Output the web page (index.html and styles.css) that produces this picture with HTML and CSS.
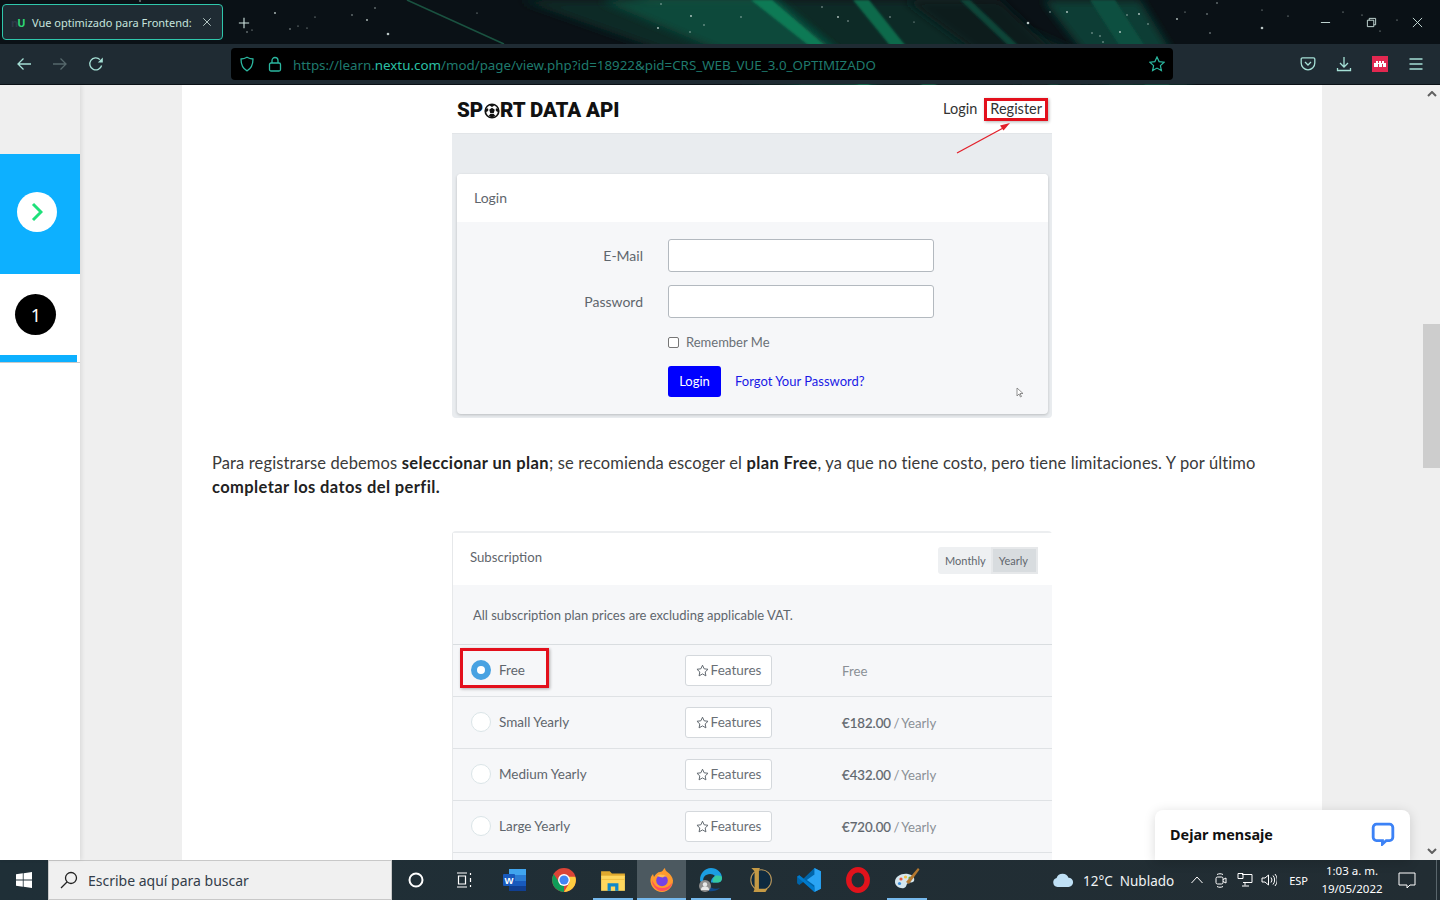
FILE: index.html
```html
<!DOCTYPE html>
<html lang="es">
<head>
<meta charset="utf-8">
<title>Vue optimizado para Frontend</title>
<link rel="stylesheet" href="styles.css">
</head>
<body>
<div class="screen">
  <header class="chrome">
    <svg class="wallpaper" viewBox="0 0 1440 85" preserveAspectRatio="none">
      <defs>
        <filter id="soft"><feGaussianBlur stdDeviation="4"/></filter>
        <filter id="soft1"><feGaussianBlur stdDeviation="1.200"/></filter>
      </defs>
      <polygon points="520,0 960,0 1150,85 760,85" fill="#0a2a28" filter="url(#soft)"/>
      <polygon points="629,0 777,0 875,85 855,85" fill="#0c5a44" filter="url(#soft)"/>
      <polygon points="600,0 770,0 880,85 800,85" fill="#0b4a3b" filter="url(#soft)"/>
      <polygon points="751,0 772,0 871,85 859,85" fill="#0f7a55" filter="url(#soft1)"/>
      <polygon points="853,0 869,0 937,85 922,85" fill="#0e6a4c" filter="url(#soft1)"/>
      <polygon points="905,0 1000,0 1090,85 1020,85" fill="#071e1c" filter="url(#soft)"/>
      <polygon points="960,0 970,0 1060,85 1050,85" fill="#0c4438" filter="url(#soft1)"/>
      <polygon points="1043,0 1140,0 1192,85 1109,85" fill="#0b3d34" filter="url(#soft)"/>
      <polygon points="1090,0 1115,0 1170,85 1145,85" fill="#0d5040" filter="url(#soft1)"/>
      <line x1="407" y1="0" x2="504" y2="44" stroke="#1a5240" stroke-width="1.600"/>
      <g class="stars">
        <circle cx="388" cy="34" r="1.300"/><circle cx="1028" cy="23" r="1.300"/><circle cx="1262" cy="28" r="1.300"/>
        <circle cx="140" cy="1" r=".8"/><circle cx="275" cy="13" r=".9"/><circle cx="315" cy="17" r=".6"/><circle cx="352" cy="15" r=".7"/><circle cx="375" cy="8" r=".7"/><circle cx="367" cy="20" r=".9"/><circle cx="290" cy="29" r=".7"/><circle cx="298" cy="26" r=".6"/><circle cx="307" cy="28" r=".6"/><circle cx="247" cy="32" r=".7"/><circle cx="252" cy="30" r=".6"/><circle cx="477" cy="13" r=".6"/>
        <circle cx="1067" cy="12" r=".9"/><circle cx="1050" cy="12" r=".7"/><circle cx="1127" cy="15" r=".7"/><circle cx="1139" cy="14" r=".9"/><circle cx="1148" cy="24" r=".7"/><circle cx="1120" cy="32" r=".9"/><circle cx="1092" cy="33" r=".7"/><circle cx="1100" cy="36" r=".7"/><circle cx="1103" cy="42" r=".7"/><circle cx="1177" cy="19" r=".9"/><circle cx="1185" cy="12" r=".6"/><circle cx="1207" cy="14" r=".7"/><circle cx="1210" cy="33" r=".7"/><circle cx="1262" cy="10" r=".6"/><circle cx="1288" cy="16" r=".6"/><circle cx="1343" cy="12" r=".6"/><circle cx="1362" cy="15" r=".6"/><circle cx="1217" cy="3" r=".7"/><circle cx="1380" cy="31" r=".6"/><circle cx="1397" cy="20" r=".6"/>
        <circle cx="661" cy="4" r=".7"/><circle cx="691" cy="16" r=".9"/><circle cx="741" cy="17" r=".7"/><circle cx="704" cy="25" r=".7"/><circle cx="658" cy="28" r=".9"/><circle cx="690" cy="32" r=".7"/><circle cx="838" cy="17" r=".9"/><circle cx="848" cy="21" r=".7"/><circle cx="822" cy="7" r=".7"/><circle cx="890" cy="17" r=".7"/><circle cx="914" cy="22" r=".6"/>
      </g>
    </svg>

    <div class="tabstrip">
      <div class="tab">
        <span class="favicon"><span class="fav-n">n</span><span class="fav-u">U</span></span>
        <span class="tab-title">Vue optimizado para Frontend:</span>
        <svg class="tab-close" viewBox="0 0 12 12"><path d="M1.500 1.500l9 9M10.500 1.500l-9 9"/></svg>
      </div>
      <svg class="new-tab" viewBox="0 0 14 14"><path d="M7 1v12M1 7h12"/></svg>
      <div class="win-controls">
        <span class="win-btn"><svg viewBox="0 0 12 12"><path d="M1 6h10"/></svg></span>
        <span class="win-btn"><svg viewBox="0 0 12 12"><path d="M1.500 3.500h7v7h-7zM3.500 3.500v-2h7v7h-2"/></svg></span>
        <span class="win-btn"><svg viewBox="0 0 12 12"><path d="M1 1l10 10M11 1L1 11"/></svg></span>
      </div>
    </div>

    <div class="toolbar">
      <div class="nav-group">
        <svg class="tool-ico" viewBox="0 0 16 16"><path d="M15 8H2M7.500 2.500L2 8l5.500 5.500"/></svg>
        <svg class="tool-ico dim" viewBox="0 0 16 16"><path d="M1 8h13M8.500 2.500L14 8l-5.500 5.500"/></svg>
        <svg class="tool-ico" viewBox="0 0 16 16"><path d="M13.600 9.500A6 6 0 1 1 12 3.600"/><path class="filled" d="M14.800 1.500v5h-5z"/></svg>
      </div>
      <div class="urlbar">
        <svg class="url-ico" viewBox="0 0 16 16"><path d="M8 1.200c2 1.200 4 1.700 6 1.800 0 5-1.500 9.500-6 11.800C3.500 12.500 2 8 2 3c2-.1 4-.6 6-1.800z"/></svg>
        <svg class="url-ico lock" viewBox="0 0 16 16"><rect x="2.500" y="7" width="11" height="8" rx="1.500"/><path d="M5 7V4.500a3 3 0 0 1 6 0V7"/></svg>
        <span class="url">https://learn.<b>nextu.com</b>/mod/page/view.php?id=18922&amp;pid=CRS_WEB_VUE_3.0_OPTIMIZADO</span>
        <svg class="url-ico star" viewBox="0 0 16 16"><path d="M8 1l2.100 4.600 5 .6-3.700 3.400 1 5L8 12.100 3.600 14.600l1-5L.9 6.200l5-.6z"/></svg>
      </div>
      <div class="tool-right">
        <svg class="tool-ico" viewBox="0 0 16 16"><path d="M2.500 1.800h11c.8 0 1.300.5 1.300 1.300V7a6.800 6.800 0 0 1-13.600 0V3.100c0-.8.500-1.300 1.300-1.300z"/><path d="M5 6l3 3 3-3"/></svg>
        <svg class="tool-ico" viewBox="0 0 16 16"><path d="M8 1v10M4 7l4 4 4-4M1.500 12v2.500h13V12"/></svg>
        <svg class="moz" viewBox="0 0 16 16"><rect width="16" height="16" fill="#e22850"/><path fill="#fff" d="M2 11V7h2V5h2v2h1V5h2v2h1V5h2v2h2v4h-3V8h-1v3H7V8H6v3z"/></svg>
        <svg class="tool-ico" viewBox="0 0 16 16"><path d="M1.500 3h13M1.500 8h13M1.500 13h13"/></svg>
      </div>
    </div>
  </header>

  <div class="page">
    <aside class="sidebar">
      <div class="side-top"></div>
      <div class="side-toggle">
        <span class="toggle-disc"><svg viewBox="0 0 12 20"><path d="M2 2l8 8-8 8"/></svg></span>
      </div>
      <div class="side-body">
        <div class="side-step"><span class="step-num">1</span></div>
        <div class="side-progress"></div>
        <div class="side-rule"></div>
      </div>
    </aside>

    <main class="content">
      <section class="shot shot-login">
        <div class="app-head">
          <span class="logo">SP<svg class="ball" viewBox="0 0 20 20"><circle cx="10" cy="10" r="8.500"/><path class="ball-fill" d="M10 6l3.500 2.500-1.300 4h-4.400l-1.300-4zM10 1.500l3 1.500-3 2-3-2zM2 7.500l3-1 .5 2.500L3 12zM18 7.500l-3-1-.5 2.500L17 12zM6 16l2-2.500h4l2 2.500-4 2.500z"/></svg>RT DATA API</span>
          <nav class="app-nav"><span>Login</span><span>Register</span></nav>
        </div>
        <div class="app-body">
          <div class="card">
            <div class="card-head">Login</div>
            <div class="card-form">
              <div class="form-row"><label class="form-label">E-Mail</label><span class="form-input"></span></div>
              <div class="form-row"><label class="form-label">Password</label><span class="form-input"></span></div>
              <div class="form-check"><span class="check-box"></span>Remember Me</div>
              <div class="form-actions"><span class="btn-login">Login</span><span class="forgot">Forgot Your Password?</span></div>
            </div>
          </div>
        </div>
        <div class="mark mark-register"></div>
        <svg class="arrow" viewBox="0 0 60 40"><path d="M2 33L50 7" stroke="#e3202a" stroke-width="1.300" fill="none"/><path d="M55 3l-10 2.500 3.500 5z" fill="#e3202a"/></svg>
        <svg class="cursor" viewBox="0 0 8 12"><path d="M1 1v8l2-2 1.500 3 1-.5L4 6.500h3z" fill="#fff" stroke="#777" stroke-width=".8"/></svg>
      </section>

      <p class="lesson">Para registrarse debemos <strong>seleccionar un plan</strong>; se recomienda escoger el <strong>plan Free</strong>, ya que no tiene costo, pero tiene limitaciones. Y por último <strong>completar los datos del perfil.</strong></p>

      <section class="shot shot-plans">
        <div class="plans-head">
          <span>Subscription</span>
          <div class="period"><span>Monthly</span><span class="period-on">Yearly</span></div>
        </div>
        <div class="plans-note">All subscription plan prices are excluding applicable VAT.</div>
        <div class="plan">
          <span class="radio radio-on"></span><span class="plan-name">Free</span>
          <span class="features"><svg class="f-star" viewBox="0 0 16 16"><path d="M8 1.500l2 4.400 4.800.6-3.500 3.300.9 4.800L8 12.200l-4.200 2.400.9-4.800L1.200 6.500 6 5.900z"/></svg>Features</span>
          <span class="price-free">Free</span>
        </div>
        <div class="plan">
          <span class="radio"></span><span class="plan-name">Small Yearly</span>
          <span class="features"><svg class="f-star" viewBox="0 0 16 16"><path d="M8 1.500l2 4.400 4.800.6-3.500 3.300.9 4.800L8 12.200l-4.200 2.400.9-4.800L1.200 6.500 6 5.900z"/></svg>Features</span>
          <span class="price"><b>€182.00</b> / Yearly</span>
        </div>
        <div class="plan">
          <span class="radio"></span><span class="plan-name">Medium Yearly</span>
          <span class="features"><svg class="f-star" viewBox="0 0 16 16"><path d="M8 1.500l2 4.400 4.800.6-3.500 3.300.9 4.800L8 12.200l-4.200 2.400.9-4.800L1.200 6.500 6 5.900z"/></svg>Features</span>
          <span class="price"><b>€432.00</b> / Yearly</span>
        </div>
        <div class="plan">
          <span class="radio"></span><span class="plan-name">Large Yearly</span>
          <span class="features"><svg class="f-star" viewBox="0 0 16 16"><path d="M8 1.500l2 4.400 4.800.6-3.500 3.300.9 4.800L8 12.200l-4.200 2.400.9-4.800L1.200 6.500 6 5.900z"/></svg>Features</span>
          <span class="price"><b>€720.00</b> / Yearly</span>
        </div>
        <div class="plan plan-cut"></div>
        <div class="mark mark-free"></div>
      </section>
    </main>

    <div class="scrollbar">
      <svg class="sb-arrow" viewBox="0 0 10 6"><path d="M1 5l4-4 4 4"/></svg>
      <div class="sb-track"><div class="sb-thumb"></div></div>
      <svg class="sb-arrow" viewBox="0 0 10 6"><path d="M1 1l4 4 4-4"/></svg>
    </div>

    <div class="chat">
      <span>Dejar mensaje</span>
      <svg class="chat-ico" viewBox="0 0 22 22"><path d="M5 2h12a3 3 0 0 1 3 3v9a3 3 0 0 1-3 3h-3l-3.500 3.200V17H5a3 3 0 0 1-3-3V5a3 3 0 0 1 3-3z"/></svg>
    </div>
  </div>

  <footer class="taskbar">
    <div class="start">
      <svg viewBox="0 0 16 16"><path fill="#fff" d="M0 2.300l6.800-1v6.300H0zM7.600 1.200L16 0v7.600H7.600zM0 8.400h6.800v6.300l-6.800-1zM7.600 8.400H16V16l-8.400-1.200z"/></svg>
    </div>
    <div class="search">
      <svg viewBox="0 0 18 18"><circle cx="11" cy="7" r="5.500"/><path d="M7 11l-6 6"/></svg>
      <span>Escribe aquí para buscar</span>
    </div>
    <div class="task task-sys"><svg viewBox="0 0 18 18"><circle class="cortana" cx="9" cy="9" r="6.500"/></svg></div>
    <div class="task task-sys"><svg viewBox="0 0 18 18"><path class="sys-line" d="M2 2h10M2 16h10M3.500 5h7v8h-7zM15.500 2v2M15.500 7v4M15.500 14v2"/></svg></div>
    <div class="task task-first"><svg viewBox="0 0 26 26"><rect x="7" y="2" width="17" height="22" rx="1" fill="#2b7cd3"/><rect x="7" y="2" width="17" height="6" fill="#41a5ee"/><rect x="7" y="14" width="17" height="5" fill="#185abd"/><rect x="7" y="19" width="17" height="5" fill="#103f91"/><rect x="1" y="7" width="12" height="12" rx="1" fill="#185abd"/><text x="7" y="16.500" class="word-w">W</text></svg></div>
    <div class="task"><svg viewBox="0 0 24 24"><circle cx="12" cy="12" r="11" fill="#db4437"/><path fill="#0f9d58" d="M12 23a11 11 0 0 1-9.500-16.500L8 15l4 1z"/><path fill="#ffcd40" d="M23 12a11 11 0 0 1-11 11l5-8.500-1-5.500h6.300c.5 1 .7 2 .7 3z"/><circle cx="12" cy="12" r="5.500" fill="#fff"/><circle cx="12" cy="12" r="4.200" fill="#4285f4"/></svg></div>
    <div class="task task-open"><svg viewBox="0 0 24 24"><path fill="#e0a92e" d="M1 4h8l2 2h12v3H1z"/><path fill="#ffd75e" d="M1 8h22v14H1z"/><rect x="7" y="15" width="10" height="7" fill="#0f88c9"/><rect x="10" y="18" width="4" height="4" fill="#ffd75e"/><rect x="1" y="11" width="22" height="1" fill="#f2c244"/></svg></div>
    <div class="task task-active"><svg viewBox="0 0 26 26"><path fill="#ff9a2e" d="M13 25A11.500 11.500 0 0 1 2 10c1-2 1.500-2 2-3l1 3c1.500-3 4-5 6-5 3 0 3-3 5-4 0 2 1 3 3 4.500 2.500 2 4.500 4.500 5 8A11.500 11.500 0 0 1 13 25z"/><path fill="#ff4f5e" d="M3 13c0 6 5 11 10 11 6 0 10-5 10-8-2 3-6 5-10 5-5 0-8-3-10-8z"/><circle cx="13" cy="13.500" r="5.800" fill="#7542e5"/><path fill="#ffbd4f" d="M8 9c3-2 7-2 10 1-2-.8-3-.5-4 .5-2 0-4-1-6-1.500z"/></svg></div>
    <div class="task task-open"><svg viewBox="0 0 26 26"><path fill="#1b9de2" d="M2 13C2 6 7 1 13 1c6 0 11 4.500 11 10 0 3-2 4.500-4.500 4.500H13c0-4 3-6 4-6.500-2-2.500-8-3-11 1-1 1.500-1 4-.5 6-2-.5-3.500-1.500-3.500-3z"/><path fill="#36c9a0" d="M24 11c0 3-2 4.500-4.500 4.500H15c-1-3 1-6 3-7 3 0 6 0 6 2.500z"/><path fill="#114a8b" d="M8 23c3 2 10 2 14-2-3 1-6 1-9-.5z"/><circle cx="7" cy="19" r="6" fill="#8e8e8e"/><circle cx="7" cy="17.500" r="2.200" fill="#e8e8e8"/><path fill="#e8e8e8" d="M3 23c0-3 2-3.500 4-3.500s4 .5 4 3.500z"/></svg></div>
    <div class="task"><svg viewBox="0 0 24 24"><circle cx="13" cy="12" r="9.500" fill="#0f2a3f" stroke="#b9975b" stroke-width="1"/><path fill="#c59a45" d="M4 1h8l-1 2v17h8l-2 3H6l1-3V4z"/></svg></div>
    <div class="task"><svg viewBox="0 0 24 24"><path fill="#0065a9" d="M17 1l6 3v16l-6 3-10-9.500L3 16.500 1 15V9l2-1.500 4 3z"/><path fill="#2aa4f4" d="M17 1l6 3v16l-6 3zM17 7l-7 5 7 5z"/><path fill="#007acc" d="M1 9l2-1.500L17 19v4L1 9z"/></svg></div>
    <div class="task"><svg viewBox="0 0 24 24"><ellipse class="opera" cx="12" cy="12" rx="8.500" ry="9.500"/></svg></div>
    <div class="task task-open"><svg viewBox="0 0 26 26"><path fill="#d5e6ee" d="M1 15C1 9 8 6 14 7c5 1 7 4 6 7-1 2-4 1-6 2-2 1-1 4-4 5-4 1-9-2-9-6z"/><circle cx="7" cy="12" r="1.600" fill="#e8563f"/><circle cx="11.500" cy="10" r="1.600" fill="#f2c244"/><circle cx="16" cy="11" r="1.600" fill="#57b94a"/><circle cx="5.500" cy="16.500" r="1.600" fill="#3d8fdb"/><path fill="#b5782f" d="M24 1l1.500 1.500L15 17l-3-2z"/></svg></div>

    <div class="tray">
      <svg class="cloud" viewBox="0 0 24 16"><path d="M6 15a5 5 0 0 1-1-9.800A7 7 0 0 1 18 5a5 5 0 0 1 0 10z"/></svg>
      <span class="weather">12°C&nbsp;&nbsp;Nublado</span>
      <svg class="tray-ico chev" viewBox="0 0 14 14"><path d="M1.500 10L7 4l5.500 6"/></svg>
      <svg class="tray-ico" viewBox="0 0 16 16"><rect x="3" y="5" width="7" height="7" rx="1.500"/><path d="M10 7.500l3-1.500v5l-3-1.500M4 2.500c2-1 4-1 6 0M4 14.500c2 1 4 1 6 0"/></svg>
      <svg class="tray-ico" viewBox="0 0 16 16"><path d="M5 2.500h10v8H6M1 1.500h5v5H1zM8 10.500v3M5 14h7"/></svg>
      <svg class="tray-ico" viewBox="0 0 16 16"><path d="M1 6v4h3l3.500 3V3L4 6zM10 5.500a4 4 0 0 1 0 5M12 3.500a7 7 0 0 1 0 9M14 2a9 9 0 0 1 0 12"/></svg>
      <span class="lang">ESP</span>
      <div class="clock"><span>1:03 a. m.</span><span>19/05/2022</span></div>
      <svg class="tray-ico notify" viewBox="0 0 18 18"><path d="M1 2h16v12h-5l-3 3v-3H1z"/></svg>
      <span class="show-desk"></span>
    </div>
  </footer>
</div>
</body>
</html>
```

FILE: styles.css
```css
* { box-sizing: border-box; }
html, body { margin: 0; height: 100%; }
body { overflow: hidden; font-family: "Lato", "Noto Sans", sans-serif; background: #efefef; }
svg { display: block; flex: none; }

.screen { width: 1440px; height: 900px; display: flex; flex-direction: column; overflow: hidden; }

/* browser chrome */
.chrome { position: relative; height: 85px; flex: none; background: #0a1116; }
.wallpaper { position: absolute; left: 0; top: 0; width: 1440px; height: 85px; }
.stars { fill: #d9e6e3; opacity: .85; }
.tabstrip { position: relative; height: 44px; display: flex; align-items: flex-start; padding: 4px 0 0 2px; }
.tab { width: 221px; height: 36px; display: flex; align-items: center; padding: 0 10px 0 8px; background: #1f2b33; border: 1px solid #2fc7ac; border-radius: 4px; color: #c6e4de; font: 11px "Noto Sans", sans-serif; }
.favicon { width: 16px; display: flex; font: 700 11px/1 "Noto Sans", sans-serif; letter-spacing: -1px; flex: none; margin-right: 5px; }
.fav-n { color: #2f3a48; }
.fav-u { color: #2ed573; }
.tab-title { flex: 1; white-space: nowrap; }
.tab-close { width: 10px; height: 10px; margin-left: 7px; }
.tab-close path, .new-tab path, .win-btn path { fill: none; stroke: #cfe5e0; stroke-width: 1; }
.new-tab { width: 12px; height: 12px; margin: 13px 0 0 15px; }
.new-tab path { stroke-width: 1.300; }
.win-controls { margin-left: auto; margin-top: -4px; display: flex; }
.win-btn { width: 46px; height: 44px; display: flex; align-items: center; justify-content: center; }
.win-btn svg { width: 11px; height: 11px; }

.toolbar { position: relative; height: 40px; background: #1f2b33; display: flex; align-items: center; }
.nav-group { width: 231px; padding-left: 16px; display: flex; gap: 20px; }
.tool-ico { width: 16px; height: 16px; fill: none; stroke: #a5e0d6; stroke-width: 1.300; }
.tool-ico.dim { stroke: #56686c; }
.tool-ico .filled { fill: #a5e0d6; stroke: none; }
.urlbar { width: 942px; height: 32px; background: #000; border-radius: 4px; display: flex; align-items: center; padding: 0 8px; }
.url-ico { width: 16px; height: 16px; fill: none; stroke: #2bb8a0; stroke-width: 1.300; }
.lock { margin-left: 12px; }
.url { margin: 2px 0 0 10px; font: 13.350px "Noto Sans", sans-serif; color: #1f7a6d; white-space: nowrap; }
.url b { font-weight: 400; color: #2bc0a6; }
.star { margin-left: auto; stroke-width: 1.200; }
.tool-right { margin-left: auto; display: flex; align-items: center; gap: 20px; padding-right: 16px; }
.moz { width: 16px; height: 16px; }

/* page */
.page { position: relative; flex: 1; min-height: 0; display: flex; background: #efefef; }
.sidebar { width: 80px; flex: none; display: flex; flex-direction: column; box-shadow: 2px 0 4px rgba(0,0,0,.08); position: relative; z-index: 1; background: #efefef; }
.side-top { height: 69px; flex: none; }
.side-toggle { height: 120px; flex: none; background: #0db0ff; display: flex; align-items: center; padding-left: 17px; }
.toggle-disc { width: 40px; height: 40px; border-radius: 50%; background: #fff; display: flex; align-items: center; justify-content: center; margin-top: -4px; }
.toggle-disc svg { width: 12px; height: 20px; fill: none; stroke: #1ee07a; stroke-width: 3; }
.side-body { flex: 1; background: #fff; display: flex; flex-direction: column; }
.side-step { height: 81px; padding: 20px 0 0 15px; }
.step-num { width: 41px; height: 41px; border-radius: 50%; background: #000; color: #fff; display: flex; align-items: center; justify-content: center; padding-left: 1px; font: 18px "Noto Sans", sans-serif; }
.side-progress { width: 77px; height: 7px; background: #0db0ff; }
.side-rule { height: 1px; background: #c9c9c9; }

.content { width: 1140px; margin-left: 102px; flex: none; background: #fff; display: flex; flex-direction: column; overflow: hidden; }
.shot { position: relative; width: 600px; margin: 0 auto; flex: none; font-size: 14px; color: #5f666d; }
.shot-login { height: 333px; display: flex; flex-direction: column; }

.app-head { height: 48px; background: #fff; display: flex; justify-content: space-between; padding: 11px 10px 0 5px; }
.logo { display: flex; align-items: center; height: 27px; margin-top: 1px; font: 900 20.500px/1 "Roboto", sans-serif; color: #111; letter-spacing: -.1px; }
.ball { width: 16px; height: 16px; margin: 0 .5px; }
.ball circle { fill: #fff; stroke: #111; stroke-width: 2; }
.ball-fill { fill: #111; }
.app-nav { display: flex; gap: 13px; font-size: 14.500px; color: #333; height: 26px; margin-top: -1px; align-items: center; }
.app-body { flex: 1; background: #e9ecef; border-top: 1px solid #e2e5e8; border-radius: 0 0 4px 4px; padding: 40px 4px 4px 5px; }
.card { height: 240px; border-radius: 4px; background: #f6f7f9; box-shadow: 0 1px 3px rgba(0,0,0,.2); overflow: hidden; }
.card-head { height: 48px; background: #fff; padding: 15px 17px; font-size: 14px; color: #5f666d; line-height: 18px; }
.card-form { padding-top: 17px; display: flex; flex-direction: column; }
.form-row { display: flex; align-items: center; margin-bottom: 13px; font-size: 14px; }
.form-label { width: 186px; text-align: right; margin-right: 25px; padding-bottom: 1px; }
.form-input { width: 266px; height: 33px; background: #fff; border: 1px solid #b3b9bf; border-radius: 3px; }
.form-check { display: flex; align-items: center; margin: 3px 0 17px 211px; height: 15px; font-size: 13px; color: #6a7076; }
.check-box { width: 11px; height: 11px; margin: 1px 7px 0 0; border: 1px solid #767676; border-radius: 2px; background: #fff; }
.form-actions { display: flex; align-items: center; margin-left: 211px; font-size: 13px; }
.btn-login { width: 53px; height: 31px; padding-bottom: 1px; background: #0000ff; color: #fff; border-radius: 3px; display: flex; align-items: center; justify-content: center; }
.forgot { margin: -1px 0 0 14px; color: #1a1ae6; }

.mark { position: absolute; border: 3px solid #e3101c; box-shadow: 1px 1px 3px rgba(0,0,0,.3); }
.mark-register { left: 532px; top: 13px; width: 64px; height: 23px; }
.mark-free { left: 7px; top: 115px; width: 89px; height: 40px; }
.arrow { position: absolute; left: 503px; top: 35px; width: 60px; height: 40px; }
.cursor { position: absolute; left: 564px; top: 302px; width: 8px; height: 12px; }

.lesson { width: 1080px; margin: 33px auto 32px; flex: none; font: 16.500px/24px "Lato", sans-serif; letter-spacing: .13px; color: #3a3a3a; }
.lesson strong { font-weight: 700; color: #222; letter-spacing: .4px; }

.shot-plans { background: #f6f7f9; border-top: 2px solid #eceef0; border-left: 1px solid #e6e8ea; border-radius: 4px 4px 0 0; font-size: 13.500px; }
.plans-head { height: 52px; background: #fff; display: flex; justify-content: space-between; padding: 16px 14px 0 17px; font-size: 13.200px; }
.period { height: 27px; margin-top: -2px; display: flex; align-items: stretch; font-size: 11px; background: #eef0f2; border-radius: 3px; }
.period span { padding: 0 5px 0 7px; display: flex; align-items: center; }
.period-on { background: #d8dcdf; border: 2px solid #e6e8ea; padding: 0 8px 0 6px !important; }
.plans-note { height: 60px; padding: 21px 0 0 20px; font-size: 13px; line-height: 18px; border-bottom: 1px solid #d9dde0; }
.plan { height: 52px; display: flex; align-items: center; border-bottom: 1px solid #dfe2e5; padding: 0 0 1px 18px; }
.radio { width: 20px; height: 20px; border-radius: 50%; background: #fff; border: 1px solid #dbe5e8; flex: none; }
.radio-on { background: #fff; border: 6.500px solid #48a2e2; }
.plan-name { width: 186px; margin-left: 8px; font-size: 13.500px; }
.features { width: 87px; height: 31px; background: #fff; border: 1px solid #d4d8dc; border-radius: 3px; display: flex; align-items: center; justify-content: center; gap: 2px; font-size: 13.500px; color: #6a7076; flex: none; }
.f-star { width: 13px; height: 13px; fill: none; stroke: #5f666d; stroke-width: 1.200; }
.price-free, .price { margin: 2px 0 0 70px; color: #8a9096; font-size: 13.200px; word-spacing: -1px; }
.price b { font-weight: 400; color: #5f666d; -webkit-text-stroke: .2px #5f666d; }
.plan-cut { border: 0; }

.scrollbar { width: 17px; margin-left: 101px; flex: none; display: flex; flex-direction: column; align-items: center; padding: 6px 0; }
.sb-arrow { width: 10px; height: 6px; fill: none; stroke: #606060; stroke-width: 2; flex: none; }
.sb-track { flex: 1; width: 17px; padding-top: 227px; }
.sb-thumb { height: 144px; background: #cdcdcd; }

.chat { position: absolute; left: 1155px; bottom: 0; z-index: 2; width: 255px; height: 50px; background: #fff; border-radius: 8px 8px 0 0; box-shadow: 0 2px 12px rgba(0,0,0,.15); display: flex; align-items: center; justify-content: space-between; padding: 0 15px 2px 15px; font: 700 14.400px "Noto Sans", sans-serif; color: #111; }
.chat-ico { width: 24px; height: 24px; fill: none; stroke: #3c82f6; stroke-width: 2.600; }

/* taskbar */
.taskbar { height: 40px; flex: none; background: linear-gradient(90deg, #1f2f37, #222d33); display: flex; align-items: stretch; }
.start { width: 48px; display: flex; align-items: center; justify-content: center; }
.start svg { width: 16px; height: 16px; }
.search { width: 344px; background: #f0f0f0; border: 1px solid #c8c8c8; display: flex; align-items: center; padding-left: 11px; font: 14px "Noto Sans", sans-serif; color: #333d4a; }
.search svg { width: 18px; height: 18px; fill: none; stroke: #222; stroke-width: 1.300; margin-right: 10px; }
.task { width: 49px; display: flex; align-items: center; justify-content: center; position: relative; }
.task svg { width: 26px; height: 26px; }
.task-sys { width: 48px; }
.task-sys svg { width: 18px; height: 18px; fill: none; }
.task-first { margin-left: 2px; }
.cortana { stroke: #fff; stroke-width: 2; }
.sys-line { stroke: #fff; stroke-width: 1.200; }
.word-w { font: 700 9.500px "Liberation Sans", sans-serif; fill: #fff; text-anchor: middle; }
.opera { fill: none; stroke: #e0131c; stroke-width: 5; }
.task-open::after { content: ""; position: absolute; left: 5px; right: 4px; bottom: 0; height: 2px; background: #76b9ed; }
.task-active { background: #4c5960; }
.task-active::after { content: ""; position: absolute; left: 0; right: 0; bottom: 0; height: 2px; background: #76b9ed; }
.tray { margin-left: auto; display: flex; align-items: center; color: #fff; font: 13.500px "Noto Sans", sans-serif; position: relative; }
.cloud { width: 22px; height: 15px; fill: #bfe0f5; margin-right: 9px; }
.weather { margin: 1px 16px 0 0; color: #f0f3f4; white-space: nowrap; }
.tray-ico { width: 16px; height: 16px; fill: none; stroke: #fff; stroke-width: 1; margin-right: 8px; }
.chev { width: 14px; height: 14px; margin-right: 9px; }
.lang { font-size: 11px; margin: 0 12px 0 4px; }
.clock { width: 64px; display: flex; flex-direction: column; align-items: center; font-size: 11.500px; line-height: 18px; white-space: nowrap; margin-right: 14px; }
.notify { width: 18px; height: 18px; margin: 0 20px 0 0; }
.show-desk { width: 1px; height: 40px; background: #5a666c; margin-right: 3px; }
```
